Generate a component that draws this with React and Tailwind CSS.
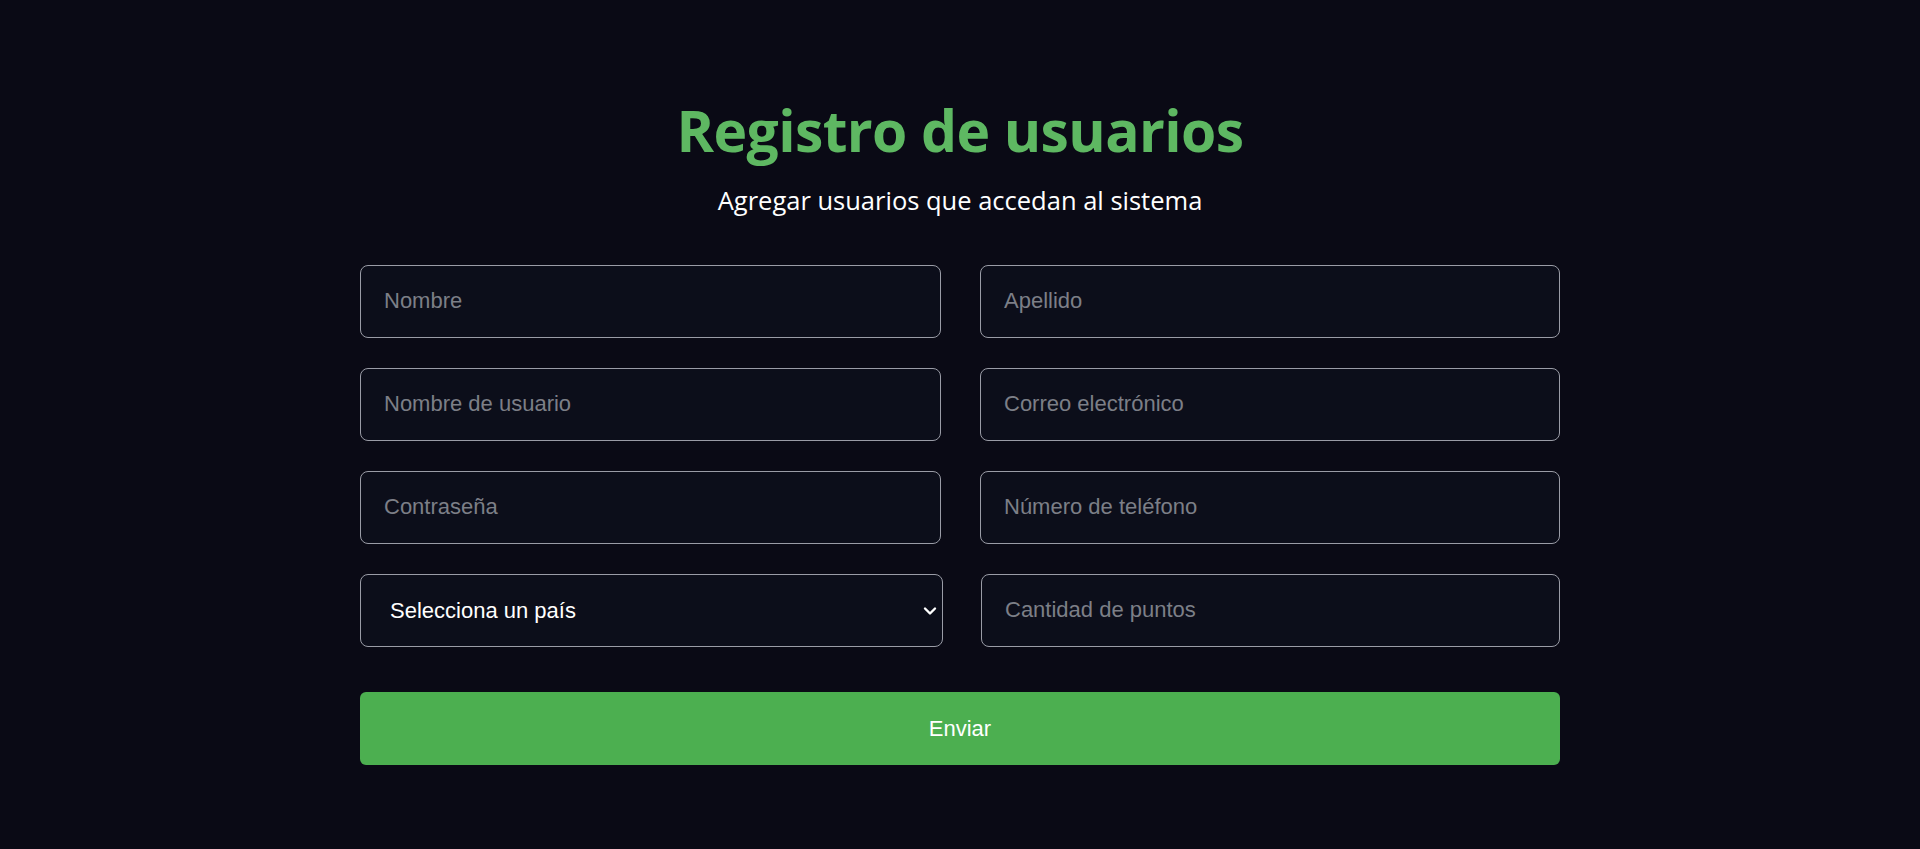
const inputClass =
  'h-[73px] w-full rounded-[8px] border border-[#9a9ca6] bg-[#0c0e1a] px-[23px] text-[22px] text-white outline-none placeholder:text-[#7c7f87]';

function Field({ placeholder, type = 'text' }) {
  return <input type={type} placeholder={placeholder} className={inputClass} />;
}

export default function App() {
  return (
    <div
      className="min-h-screen bg-[#0a0a15] text-white"
      style={{ fontFamily: '"Liberation Sans", Arial, sans-serif' }}
    >
      <div className="mx-auto flex w-[1200px] flex-col items-center pt-[96px]">
        <h1 className="font-['Open_Sans',sans-serif] text-[57px] leading-[1.2] font-bold tracking-[-0.6px] text-[#5eb862]">
          Registro de usuarios
        </h1>
        <p className="mt-[21px] font-['Open_Sans',sans-serif] text-[25.5px] leading-[1.2] text-white">
          Agregar usuarios que accedan al sistema
        </p>

        <form className="mt-[49px] flex w-full flex-col" onSubmit={(e) => e.preventDefault()}>
          <div className="grid grid-cols-[581px_580px] gap-x-[39px] gap-y-[30px]">
            <Field placeholder="Nombre" />
            <Field placeholder="Apellido" />
            <Field placeholder="Nombre de usuario" />
            <Field placeholder="Correo electrónico" type="email" />
            <Field placeholder="Contraseña" type="password" />
            <Field placeholder="Número de teléfono" type="tel" />
          </div>

          <div className="mt-[30px] grid grid-cols-[583px_579px] gap-x-[38px]">
            <div className="relative">
              <select
                defaultValue=""
                className="h-[73px] w-full appearance-none rounded-[8px] border border-[#9a9ca6] bg-[#0c0e1a] pl-[29px] text-[22px] text-white outline-none"
              >
                <option value="">Selecciona un país</option>
                <option value="ar">Argentina</option>
                <option value="mx">México</option>
                <option value="es">España</option>
              </select>
              <svg
                className="pointer-events-none absolute right-[6px] top-[32px] h-[10px] w-[14px]"
                viewBox="0 0 14 10"
                fill="none"
                stroke="white"
                strokeWidth="2.4"
                strokeLinecap="round"
                strokeLinejoin="round"
              >
                <path d="M2 2.5 L7 7.5 L12 2.5" />
              </svg>
            </div>
            <Field placeholder="Cantidad de puntos" type="number" />
          </div>

          <button
            type="submit"
            className="mt-[45px] h-[73px] w-full rounded-[6px] bg-[#4caf50] text-[22px] text-white"
          >
            Enviar
          </button>
        </form>
      </div>
    </div>
  );
}
